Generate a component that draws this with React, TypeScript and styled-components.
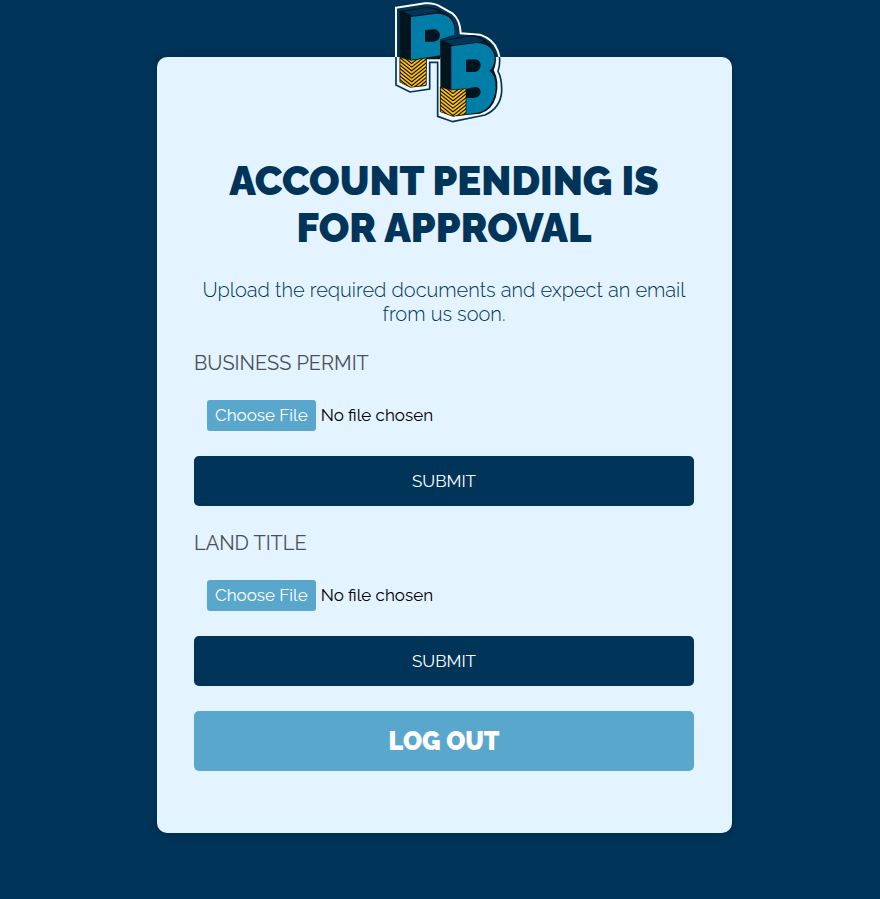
import React, { useId } from "react";
import styled, { createGlobalStyle } from "styled-components";

const GlobalStyle = createGlobalStyle`
  *, *::before, *::after { box-sizing: border-box; }
  body {
    margin: 0;
    background: #003459;
    color: #003459;
    font-family: Raleway, Lato, sans-serif;
  }
`;

const Page = styled.main`
  display: flex;
  justify-content: center;
  min-height: 100vh;
  padding: 57px 16px 65px 25px;
`;

const Card = styled.section`
  display: flex;
  flex-direction: column;
  align-items: stretch;
  align-self: flex-start;
  width: 100%;
  max-width: 575px;
  padding: 0 38px 62px 37px;
  border-radius: 10px;
  background: #e3f3ff;
  box-shadow: 0 0 10px rgba(0, 0, 0, 0.2);
`;

const LogoSvg = styled.svg`
  display: block;
  align-self: center;
  width: 125px;
  height: 130px;
  margin-top: -57px;
  margin-left: 6px;
`;

const Title = styled.h1`
  margin: 27px 0 0;
  font-size: 40px;
  line-height: 47px;
  font-weight: 900;
  text-align: center;
  text-transform: uppercase;
`;

const Lead = styled.p`
  margin: 27px 0 0;
  font-size: 20px;
  line-height: 24px;
  font-weight: 300;
  text-align: center;
`;

const UploadForm = styled.form`
  display: flex;
  flex-direction: column;
  margin-top: 25px;
`;

const FieldLabel = styled.label`
  color: #495057;
  font-size: 20px;
  line-height: 24px;
  text-transform: uppercase;
`;

const FileInput = styled.input`
  margin: 25px 0 0 13px;
  font-family: inherit;
  font-size: 17px;
  font-weight: 400;
  line-height: 20px;
  color: #000;

  &::file-selector-button {
    height: 31px;
    margin: 0 5px 0 0;
    padding: 0 8px 1px;
    border: 0;
    border-radius: 3px;
    background: #5aa7ce;
    color: #fff;
    font: inherit;
  }
`;

const Button = styled.button<{ $large?: boolean }>`
  width: 100%;
  height: ${(p) => (p.$large ? 60 : 50)}px;
  margin-top: 25px;
  padding: 0;
  border: 0;
  border-radius: 5px;
  background: ${(p) => (p.$large ? "#5aa7ce" : "#003459")};
  color: #fff;
  font-family: inherit;
  font-size: ${(p) => (p.$large ? 25 : 17)}px;
  font-weight: ${(p) => (p.$large ? 900 : 400)};
  text-transform: uppercase;
  cursor: pointer;
`;

const OUTLINE =
  "M33 23 L120 10 Q148 8 166 20 L202 40 Q226 60 227 100 L285 104 Q325 118 337 150 Q350 180 339 214 Q351 235 350 275 Q346 325 300 345 L203 365 L158 349 L158 187 L134 187 L134 267 L75 276 L33 255 Z";

const FOOT_P = "M45 172 L78 181 L124 174 L124 256 L76 262 L45 246 Z";
const FOOT_B = "M166 261 L199 270 L243 266 L243 343 L204 349 L166 335 Z";

const chevrons = (x: number, top: number) =>
  Array.from({ length: 12 }, (_, i) => {
    const y = top + i * 11;
    return `M${x - 50} ${y - 40} L${x} ${y} L${x + 50} ${y - 40}`;
  }).join(" ");

function Logo() {
  return (
    <LogoSvg viewBox="0 0 375 390" role="img" aria-label="PB">
      <defs>
        <clipPath id="above"><rect width="375" height="171" /></clipPath>
        <clipPath id="below"><rect y="171" width="375" height="219" /></clipPath>
        <clipPath id="footP"><path d={FOOT_P} /></clipPath>
        <clipPath id="footB"><path d={FOOT_B} /></clipPath>
      </defs>
      <path d={OUTLINE} fill="#003459" stroke="#fff" strokeWidth="6" clipPath="url(#above)" />
      <path d={OUTLINE} fill="#f3faff" stroke="#003459" strokeWidth="5" clipPath="url(#below)" />
      <path d="M44 33 L120 22 Q150 20 168 32 L200 52 Q214 75 207 105 L166 120 L166 178 L125 178 L122 258 L76 262 L44 246 Z" fill="#00151e" />
      <path d="M55 35 L120 25 Q145 23 163 35 L84 47 Z" fill="#003459" />
      <path d="M78 51 L155 41 Q199 42 207 78 Q210 92 207 105 L166 118 L166 166 L78 180 Z" fill="#007ea7" />
      <path d="M120 90 L148 88 Q163 90 165 105 Q163 124 146 125 L120 125 Z" fill="#00151e" />
      <path d={FOOT_P} fill="#17150b" />
      <path d={chevrons(80, 185)} fill="none" stroke="#ffc20e" strokeWidth="5" clipPath="url(#footP)" />
      <path d={FOOT_P} fill="none" stroke="#17150b" strokeWidth="2" />
      <path d="M166 122 L260 105 Q290 107 315 133 Q344 170 326 210 Q345 245 333 290 Q322 330 285 341 L204 349 L166 335 Z" fill="#00151e" />
      <path d="M175 122 L260 109 Q280 110 298 124 L204 136 Z" fill="#003459" />
      <path d="M199 139 L275 129 Q325 131 329 176 Q328 200 313 212 Q333 224 332 265 Q326 322 285 337 L243 343 L243 267 L199 271 Z" fill="#007ea7" />
      <path d="M243 179 L271 178 Q286 180 287 196 Q286 214 269 216 L243 216 Z M199 271 L243 267 L270 260 Q287 262 287 276 Q286 292 266 294 L243 294 Z" fill="#00151e" />
      <path d={FOOT_B} fill="#17150b" />
      <path d={chevrons(204, 275)} fill="none" stroke="#ffc20e" strokeWidth="5" clipPath="url(#footB)" />
      <path d={FOOT_B} fill="none" stroke="#17150b" strokeWidth="2" />
    </LogoSvg>
  );
}

function DocumentUpload({ label }: { label: string }) {
  const id = useId();
  return (
    <UploadForm onSubmit={(event) => event.preventDefault()}>
      <FieldLabel htmlFor={id}>{label}</FieldLabel>
      <FileInput id={id} type="file" />
      <Button type="submit">Submit</Button>
    </UploadForm>
  );
}

export default function App() {
  return (
    <>
      <GlobalStyle />
      <Page>
        <Card>
          <Logo />
          <Title>Account pending is for approval</Title>
          <Lead>Upload the required documents and expect an email from us soon.</Lead>
          <DocumentUpload label="Business Permit" />
          <DocumentUpload label="Land Title" />
          <Button type="button" $large>Log out</Button>
        </Card>
      </Page>
    </>
  );
}
